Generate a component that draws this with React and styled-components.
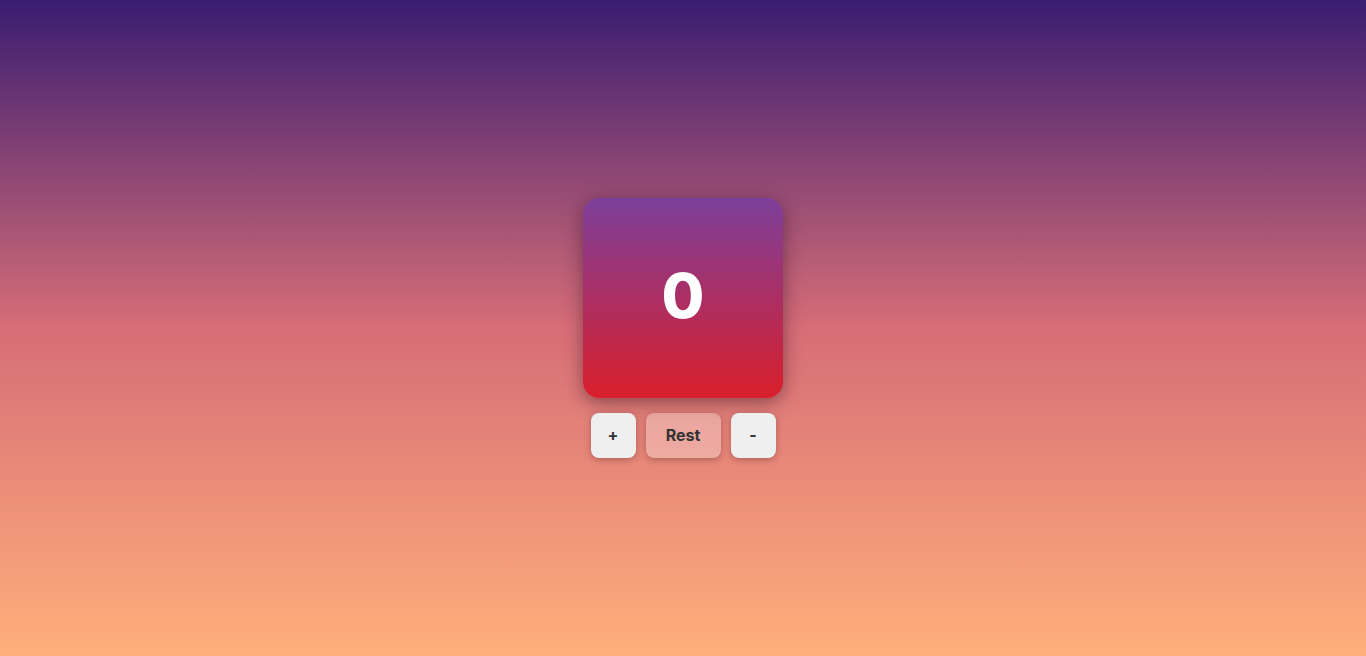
import React, { useState } from "react";
import styled, { createGlobalStyle } from "styled-components";

const GlobalStyle = createGlobalStyle`
  html, body {
    margin: 0;
    padding: 0;
  }
  body {
    font-family: "Inter", "Open Sans", sans-serif;
  }
`;

const Page = styled.div`
  min-height: 100vh;
  display: flex;
  flex-direction: column;
  align-items: center;
  justify-content: center;
  gap: 15px;
  padding-bottom: 1px;
  box-sizing: border-box;
  background: linear-gradient(to bottom, #3a1c71, #d76d77, #ffaf7b);
`;

const Card = styled.div`
  width: 200px;
  height: 200px;
  border-radius: 16px;
  display: flex;
  align-items: center;
  justify-content: center;
  background: linear-gradient(to bottom, #7c3f9a, #da1f2c);
  box-shadow: 0 4px 18px rgba(50, 15, 35, 0.5);
`;

const Count = styled.div`
  font-family: "Inter", sans-serif;
  font-size: 62px;
  font-weight: 800;
  color: #ffffff;
  line-height: 1;
  margin-top: -4px;
`;

const Controls = styled.div`
  display: flex;
  gap: 10px;
`;

const Button = styled.button`
  height: 45px;
  width: ${(p) => (p.$wide ? "75px" : "45px")};
  border: none;
  border-radius: 8px;
  background: ${(p) => (p.$wide ? "rgba(255, 255, 255, 0.3)" : "#efefef")};
  color: #333333;
  font-family: "Inter", sans-serif;
  font-size: 16px;
  font-weight: 700;
  cursor: pointer;
  box-shadow: 0 2px 6px rgba(80, 30, 30, 0.35);
`;

export default function App() {
  const [count, setCount] = useState(0);
  return (
    <>
      <GlobalStyle />
      <Page>
        <Card>
          <Count>{count}</Count>
        </Card>
        <Controls>
          <Button onClick={() => setCount(count + 1)}>+</Button>
          <Button $wide onClick={() => setCount(0)}>
            Rest
          </Button>
          <Button onClick={() => setCount(count - 1)}>-</Button>
        </Controls>
      </Page>
    </>
  );
}
